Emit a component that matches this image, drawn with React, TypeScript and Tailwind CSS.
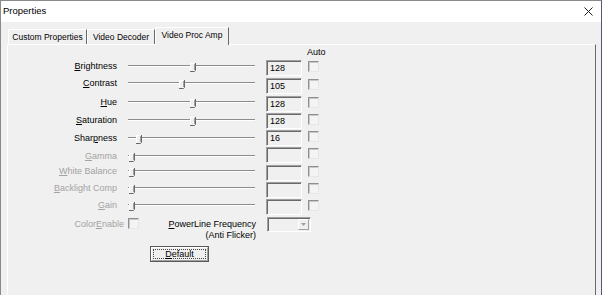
import React from 'react';

type Row = {
  label: string;
  u: number;
  value: string;
  thumb: number;
  h: string;
  lab: string; // label offset
  trk: string; // track offset
  th: string; // thumb offset
  enabled: boolean;
};

const ROWS: Row[] = [
  { label: 'Brightness', u: 0, value: '128', thumb: 62, h: 'h-[18px]', lab: 'mt-0', trk: 'mt-[5px]', th: 'top-[3px]', enabled: true },
  { label: 'Contrast', u: 0, value: '105', thumb: 51, h: 'h-[18px]', lab: '-mt-px', trk: 'mt-[4px]', th: 'top-[2px]', enabled: true },
  { label: 'Hue', u: 0, value: '128', thumb: 62, h: 'h-[17px]', lab: 'mt-0', trk: 'mt-[5px]', th: 'top-[3px]', enabled: true },
  { label: 'Saturation', u: 0, value: '128', thumb: 62, h: 'h-[17px]', lab: 'mt-px', trk: 'mt-[6px]', th: 'top-[4px]', enabled: true },
  { label: 'Sharpness', u: 4, value: '16', thumb: 8, h: 'h-[17px]', lab: 'mt-[2px]', trk: 'mt-[7px]', th: 'top-[5px]', enabled: true },
  { label: 'Gamma', u: 0, value: '', thumb: 1, h: 'h-[18px]', lab: 'mt-[3px]', trk: 'mt-[8px]', th: 'top-[6px]', enabled: false },
  { label: 'White Balance', u: 0, value: '', thumb: 1, h: 'h-[17px]', lab: 'mt-0', trk: 'mt-[5px]', th: 'top-[3px]', enabled: false },
  { label: 'Backlight Comp', u: 0, value: '', thumb: 1, h: 'h-[17px]', lab: 'mt-0', trk: 'mt-[5px]', th: 'top-[3px]', enabled: false },
  { label: 'Gain', u: 0, value: '', thumb: 1, h: 'h-[18px]', lab: 'mt-0', trk: 'mt-[5px]', th: 'top-[3px]', enabled: false },
];

// label text with the mnemonic letter underlined
const Mnemonic = ({ text, u }: { text: string; u: number }) => (
  <>
    {text.slice(0, u)}
    <span className="underline underline-offset-[1px]">{text.charAt(u)}</span>
    {text.slice(u + 1)}
  </>
);

const Thumb = () => (
  <svg width="6" height="9" viewBox="0 0 6 9">
    <path d="M0.5 0.5 H4.5 V7 L3 8.5 H0.5 Z" fill="#f0f0f0" />
    <path d="M0.5 7.5 V0.5 H4" stroke="#ffffff" fill="none" />
    <path d="M5.5 0 V7.5 L4.5 8.5 H0" stroke="#696969" fill="none" />
    <path d="M4.5 1 V7" stroke="#a0a0a0" fill="none" />
  </svg>
);

const Sunken = ({ className, children }: { className: string; children?: React.ReactNode }) => (
  <div
    className={`border border-t-[#a0a0a0] border-l-[#a0a0a0] border-r-white border-b-white bg-[#f0f0f0] shadow-[inset_1px_1px_0_0_#696969] ${className}`}
  >
    {children}
  </div>
);

const Check = ({ className }: { className: string }) => (
  <div
    className={`w-[11px] h-[11px] border border-t-[#8f8f8f] border-l-[#8f8f8f] border-r-[#e6e6e6] border-b-[#e6e6e6] bg-[#f4f4f4] shadow-[inset_1px_1px_0_0_#c8c8c8] ${className}`}
  />
);

const Tab = ({ label, selected, w }: { label: string; selected?: boolean; w: string }) => (
  <div
    className={`${w} flex items-center justify-center border-t border-l border-white border-r border-r-[#696969] bg-[#f0f0f0] text-[8.5px] ${
      selected ? 'h-[18px] relative z-10 -mb-px pb-[2px]' : 'h-[15px]'
    }`}
  >
    {label}
  </div>
);

export default function App() {
  return (
    <div className="w-[602px] h-[295px] overflow-hidden flex flex-col bg-[#f0f0f0] border-t border-l border-[#8a8a8a] border-r border-r-[#5c5377] font-['Liberation_Sans',Arial,sans-serif] text-black">
      {/* title bar */}
      <div className="h-[21px] bg-white flex items-center justify-between pl-[2px] pr-[8px] shrink-0">
        <span className="text-[9.5px]">Properties</span>
        <svg width="9" height="9" viewBox="0 0 9 9">
          <path d="M0.5 0.5 L8.5 8.5 M8.5 0.5 L0.5 8.5" stroke="#1a1a1a" strokeWidth="1" />
        </svg>
      </div>

      <div className="flex-1 flex flex-col pt-[5px]">
        {/* tabs */}
        <div className="flex items-end h-[17px] pl-[7px]">
          <Tab label="Custom Properties" w="w-[79px]" />
          <Tab label="Video Decoder" w="w-[68px]" />
          <Tab label="Video Proc Amp" w="w-[74px]" selected />
        </div>

        {/* panel */}
        <div className="ml-[6px] w-[589px] flex-1 border-t border-l border-white border-r border-r-[#696969] text-[9px]">
          <div className="h-[15px] pl-[299px] flex items-center">Auto</div>

          {ROWS.map((r) => (
            <div key={r.label} className={`${r.h} flex items-start`}>
              <div
                className={`w-[109px] text-right leading-[12px] ${r.lab} ${r.enabled ? 'text-black' : 'text-[#a3a3a3]'}`}
              >
                <Mnemonic text={r.label} u={r.u} />
              </div>
              <div className="w-[149px] relative">
                <div className={`ml-[11px] ${r.trk} w-[127px] h-[2px] border-t border-[#8c8c8c] border-b border-b-white`} />
                <div className={`absolute ${r.th}`} style={{ left: 11 + r.thumb }}>
                  <Thumb />
                </div>
              </div>
              <Sunken className="w-[36px] h-[16px] pl-[3px] flex items-center leading-none">{r.value}</Sunken>
              <Check className="ml-[6px] mt-[1px]" />
            </div>
          ))}

          {/* ColorEnable / PowerLine row */}
          <div className="h-[24px] flex items-start">
            <div className="w-[116px] text-right leading-[13px] mt-px text-[#a3a3a3]">
              <Mnemonic text="ColorEnable" u={5} />
            </div>
            <Check className="ml-[4px] mt-px" />
            <div className="w-[117px] text-right leading-[11px] mt-[2px]">
              <div>
                <Mnemonic text="PowerLine Frequency" u={0} />
              </div>
              <div>(Anti Flicker)</div>
            </div>
            <Sunken className="ml-[11px] w-[44px] h-[15px] flex justify-end items-stretch p-px">
              <div className="w-[11px] border border-t-white border-l-white border-r-[#a0a0a0] border-b-[#a0a0a0] flex items-center justify-center">
                <svg width="5" height="3" viewBox="0 0 5 3">
                  <path d="M0 0 H5 L2.5 3 Z" fill="#a0a0a0" />
                </svg>
              </div>
            </Sunken>
          </div>

          {/* default button */}
          <div className="ml-[142px] mt-[5px] w-[59px] h-[16px] border border-[#5a5a5a] flex">
            <div className="flex-1 border border-t-white border-l-white border-r-[#a0a0a0] border-b-[#a0a0a0] p-px flex">
              <div className="flex-1 border border-dotted border-[#444] flex items-center justify-center leading-none">
                <Mnemonic text="Default" u={0} />
              </div>
            </div>
          </div>
        </div>
      </div>
    </div>
  );
}
